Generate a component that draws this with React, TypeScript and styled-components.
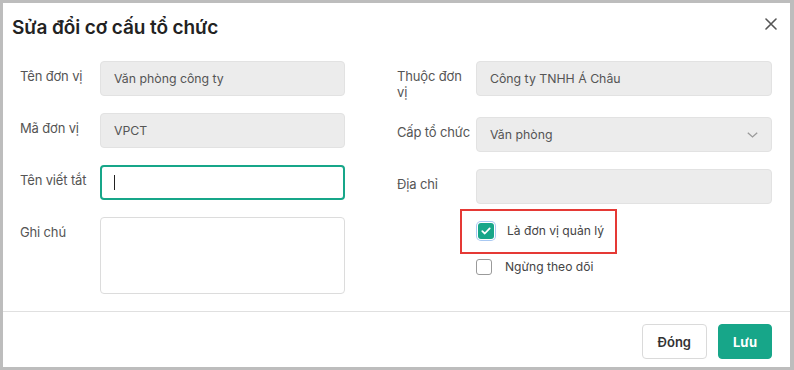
import React from "react";
import styled, { createGlobalStyle } from "styled-components";

const GREEN = "#17a689";

const GlobalStyle = createGlobalStyle`
  html, body {
    margin: 0;
    padding: 0;
  }
  body {
    background: #bdbdbd;
    padding: 3px;
    font-family: Inter, "Noto Sans", "Liberation Sans", sans-serif;
  }
`;

// Styled components
const Modal = styled.div`
  width: 787px;
  height: 364px;
  background: #fff;
  display: flex;
  flex-direction: column;
  box-sizing: border-box;
`;

const Header = styled.div`
  display: flex;
  justify-content: space-between;
  align-items: flex-start;
  padding: 13px 13px 0 9px;
`;

const Title = styled.h2`
  margin: 0;
  font-size: 19px;
  line-height: 24px;
  font-weight: 600;
  letter-spacing: -0.1px;
  color: #222;
`;

const CloseButton = styled.button`
  border: none;
  background: none;
  padding: 0;
  margin-top: 2px;
  width: 12px;
  height: 12px;
  display: flex;
  cursor: pointer;
`;

const Body = styled.div`
  display: grid;
  grid-template-columns: 325px 375px;
  column-gap: 52px;
  padding: 21px 18px 0 17px;
`;

const Column = styled.div`
  display: flex;
  flex-direction: column;
  gap: 17px;
`;

const Row = styled.div`
  display: flex;
  align-items: flex-start;
`;

const Label = styled.div<{ $width: number }>`
  width: ${(p) => p.$width}px;
  flex: none;
  box-sizing: border-box;
  padding: 7px 2px 0 0;
  font-size: 13px;
  line-height: 16px;
  letter-spacing: -0.15px;
  color: #555;
`;

const Control = styled.div`
  flex: 1;
  min-width: 0;
  display: flex;
  flex-direction: column;
  gap: 5px;
`;

const Field = styled.div<{ $variant?: "disabled" | "focused" | "plain"; $tall?: boolean }>`
  position: relative;
  box-sizing: border-box;
  height: ${(p) => (p.$tall ? 77 : 35)}px;
  display: flex;
  align-items: ${(p) => (p.$tall ? "flex-start" : "center")};
  justify-content: space-between;
  padding: 0 13px 0 ${(p) => (p.$variant === "focused" ? 12 : 13)}px;
  border-radius: 4px;
  font-size: 12.3px;
  color: #555;
  background: ${(p) => (p.$variant === "disabled" ? "#ececec" : "#fff")};
  border: ${(p) =>
    p.$variant === "focused"
      ? `2px solid ${GREEN}`
      : p.$variant === "disabled"
      ? "1px solid #e2e2e2"
      : "1px solid #dcdcdc"};
`;

const Caret = styled.span`
  width: 1px;
  height: 15px;
  background: #222;
`;

const Highlight = styled.div`
  align-self: flex-start;
  margin-left: -16px;
  border: 2px solid #e53935;
  padding: 12px 11px 13px 16px;
`;

const CheckRow = styled.label`
  display: flex;
  align-items: center;
  gap: 13px;
  font-size: 12.1px;
  line-height: 16px;
  color: #444;
  cursor: pointer;
`;

const CheckBox = styled.span<{ $checked?: boolean }>`
  flex: none;
  box-sizing: border-box;
  width: 16px;
  height: 16px;
  border-radius: 3px;
  display: flex;
  align-items: center;
  justify-content: center;
  background: ${(p) => (p.$checked ? GREEN : "#fff")};
  border: ${(p) => (p.$checked ? "none" : "1.5px solid #9a9a9a")};
  box-shadow: ${(p) => (p.$checked ? "0 0 0 1px #fff, 0 0 0 2px #a9c8f2" : "none")};
`;

const Footer = styled.div`
  margin-top: auto;
  border-top: 1px solid #e0e0e0;
  padding: 12px 18px 8px;
  display: flex;
  justify-content: flex-end;
  gap: 11px;
`;

const Button = styled.button<{ $primary?: boolean }>`
  height: 35px;
  box-sizing: border-box;
  padding: 0 ${(p) => (p.$primary ? 14 : 15)}px;
  border-radius: 4px;
  font-family: inherit;
  font-size: 13px;
  font-weight: ${(p) => (p.$primary ? 700 : 600)};
  cursor: pointer;
  color: ${(p) => (p.$primary ? "#fff" : "#333")};
  background: ${(p) => (p.$primary ? GREEN : "#fff")};
  border: 1px solid ${(p) => (p.$primary ? GREEN : "#dadada")};
`;

// Component
const App = () => {
  return (
    <>
      <GlobalStyle />
      <Modal>
        <Header>
          <Title>Sửa đổi cơ cấu tổ chức</Title>
          <CloseButton aria-label="Đóng">
            <svg width="12" height="12" viewBox="0 0 12 12">
              <path d="M1 1L11 11M11 1L1 11" stroke="#555" strokeWidth="1.6" strokeLinecap="round" />
            </svg>
          </CloseButton>
        </Header>

        <Body>
          <Column>
            <Row>
              <Label $width={80}>Tên đơn vị</Label>
              <Control>
                <Field $variant="disabled">Văn phòng công ty</Field>
              </Control>
            </Row>
            <Row>
              <Label $width={80}>Mã đơn vị</Label>
              <Control>
                <Field $variant="disabled">VPCT</Field>
              </Control>
            </Row>
            <Row>
              <Label $width={80}>Tên viết tắt</Label>
              <Control>
                <Field $variant="focused">
                  <Caret />
                </Field>
              </Control>
            </Row>
            <Row>
              <Label $width={80}>Ghi chú</Label>
              <Control>
                <Field $variant="plain" $tall />
              </Control>
            </Row>
          </Column>

          <Column>
            <Row>
              <Label $width={79}>Thuộc đơn vị</Label>
              <Control>
                <Field $variant="disabled">Công ty TNHH Á Châu</Field>
              </Control>
            </Row>
            <Row>
              <Label $width={79}>Cấp tổ chức</Label>
              <Control>
                <Field $variant="disabled">
                  Văn phòng
                  <svg width="11" height="6" viewBox="0 0 11 6">
                    <path d="M0.8 0.8L5.5 5L10.2 0.8" fill="none" stroke="#9a9a9a" strokeWidth="1.3" />
                  </svg>
                </Field>
              </Control>
            </Row>
            <Row>
              <Label $width={79}>Địa chỉ</Label>
              <Control>
                <Field $variant="disabled" />
                <Highlight>
                  <CheckRow>
                    <CheckBox $checked>
                      <svg width="10" height="8" viewBox="0 0 10 8">
                        <path d="M1.3 4.2L3.8 6.5L8.7 1.4" fill="none" stroke="#fff" strokeWidth="1.8" strokeLinecap="round" strokeLinejoin="round" />
                      </svg>
                    </CheckBox>
                    Là đơn vị quản lý
                  </CheckRow>
                </Highlight>
                <CheckRow>
                  <CheckBox />
                  Ngừng theo dõi
                </CheckRow>
              </Control>
            </Row>
          </Column>
        </Body>

        <Footer>
          <Button>Đóng</Button>
          <Button $primary>Lưu</Button>
        </Footer>
      </Modal>
    </>
  );
};

export default App;
